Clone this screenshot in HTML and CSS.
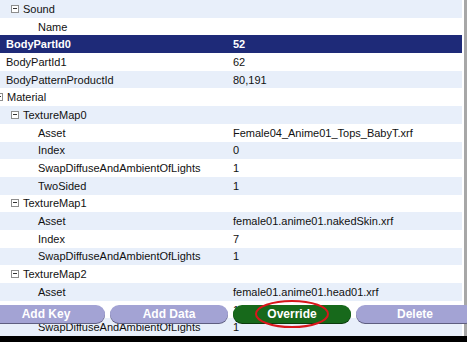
FILE: index.html
```html
<!DOCTYPE html>
<html lang="en">
<head>
<meta charset="UTF-8">
<meta name="viewport" content="width=device-width, initial-scale=1.0">
<title>Properties</title>
<link rel="stylesheet" href="styles.css">
</head>
<body>

<div class="panel">
  <div class="tree">
    <div class="row alt"><div class="k l1g"><span class="exp"></span>Sound</div><div class="v"></div></div>
    <div class="row"><div class="k l2">Name</div><div class="v"></div></div>
    <div class="row sel"><div class="k l1">BodyPartId0</div><div class="v">52</div></div>
    <div class="row"><div class="k l1">BodyPartId1</div><div class="v">62</div></div>
    <div class="row alt"><div class="k l1">BodyPatternProductId</div><div class="v">80,191</div></div>
    <div class="row"><div class="k l0g"><span class="exp"></span>Material</div><div class="v"></div></div>
    <div class="row alt"><div class="k l1g"><span class="exp"></span>TextureMap0</div><div class="v"></div></div>
    <div class="row"><div class="k l2">Asset</div><div class="v">Female04_Anime01_Tops_BabyT.xrf</div></div>
    <div class="row alt"><div class="k l2">Index</div><div class="v">0</div></div>
    <div class="row"><div class="k l2">SwapDiffuseAndAmbientOfLights</div><div class="v">1</div></div>
    <div class="row alt"><div class="k l2">TwoSided</div><div class="v">1</div></div>
    <div class="row"><div class="k l1g"><span class="exp"></span>TextureMap1</div><div class="v"></div></div>
    <div class="row alt"><div class="k l2">Asset</div><div class="v">female01.anime01.nakedSkin.xrf</div></div>
    <div class="row"><div class="k l2">Index</div><div class="v">7</div></div>
    <div class="row alt"><div class="k l2">SwapDiffuseAndAmbientOfLights</div><div class="v">1</div></div>
    <div class="row"><div class="k l1g"><span class="exp"></span>TextureMap2</div><div class="v"></div></div>
    <div class="row alt"><div class="k l2">Asset</div><div class="v">female01.anime01.head01.xrf</div></div>
    <div class="row"><div class="k l2">Index</div><div class="v">1</div></div>
    <div class="row alt"><div class="k l2">SwapDiffuseAndAmbientOfLights</div><div class="v">1</div></div>
  </div>
  <div class="edge"></div>

  <div class="actions">
    <button class="btn">Add Key</button>
    <button class="btn">Add Data</button>
    <button class="btn btn-go">Override</button>
    <button class="btn">Delete</button>
  </div>

  <!-- red marker round the Override button -->
  <svg class="mark" width="76" height="30" viewBox="0 0 76 30">
    <ellipse cx="38" cy="15" rx="36" ry="13" fill="none" stroke="#d9161c" stroke-width="2"/>
  </svg>
</div>

</body>
</html>
```

FILE: styles.css
```css
body {
  margin: 0;
  background: #000;
  font-family: "Liberation Sans", Arial, sans-serif;
  font-size: 11px;
  color: #111;
  overflow: hidden;
}

.panel {
  position: relative;
  display: flex;
  width: 467px;
  height: 336px;
  background: #fff;
  overflow: hidden;
}

.tree {
  width: 462px;
}

.edge {
  width: 3px;
  margin-left: 2px;
  background: #a7a7a7;
}

.row {
  display: flex;
  align-items: center;
  height: 17.7px;
  white-space: nowrap;
}

.row.alt {
  background: #e8effa;
}

.row.sel {
  background: #1e2a78;
  color: #fff;
  font-weight: bold;
}

.k {
  display: flex;
  align-items: center;
  width: 232px;
  flex-shrink: 0;
  box-sizing: border-box;
}

.l0g { padding-left: 0; }
.l0g .exp { margin-left: -5px; }
.l1g { padding-left: 11px; }
.l1 { padding-left: 6px; }
.l2 { padding-left: 38px; }

.exp {
  position: relative;
  width: 6px;
  height: 6px;
  margin-right: 4px;
  border: 1px solid #8d8d8d;
  background: #fff;
}

.exp::after {
  content: "";
  position: absolute;
  left: 1px;
  top: 2px;
  width: 4px;
  height: 1px;
  background: #333;
}

.v {
  padding-left: 1px;
}

/* button bar lies over the last rows */
.actions {
  position: absolute;
  top: 305px;
  left: -13px;
  display: flex;
  gap: 5px;
}

.btn {
  width: 118px;
  height: 18px;
  padding: 0;
  border: none;
  border-radius: 9px;
  background: #a3a3d4;
  box-shadow: 0 1px 0 #5e5e80;
  color: #fff;
  font-family: "Liberation Sans", Arial, sans-serif;
  font-size: 12px;
  font-weight: bold;
}

.btn-go {
  background: #17691b;
  box-shadow: 0 1px 0 #0b3a0d;
}

.mark {
  position: absolute;
  left: 254px;
  top: 299px;
}
```
